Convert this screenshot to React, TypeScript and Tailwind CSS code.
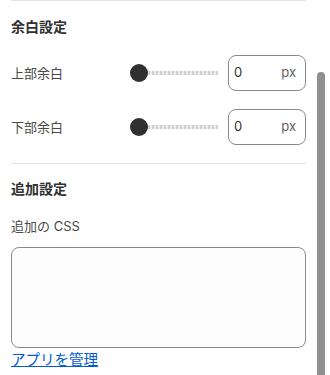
import React from 'react';

const FONT = '"Inter", "Noto Sans CJK JP", sans-serif';

// ─── Slider + number input row ───────────────────────────────────────────────
function SpacingRow({ label, value }: { label: string; value: string }) {
  return (
    <div className="flex items-center h-[36px]">
      <div className="w-[119px] text-[13px] leading-5 text-[#4a4a4a]">{label}</div>
      <div className="flex-1 flex items-center">
        <div className="w-[18px] h-[18px] rounded-full bg-[#303030] shrink-0" />
        <div className="flex-1 h-[4px] bg-[repeating-linear-gradient(90deg,#cfcfcf_0px,#cfcfcf_2px,#ececec_2px,#ececec_4px)]" />
      </div>
      <div className="ml-[10px] w-[78px] h-[36px] rounded-[8px] border border-[#8a8a8a] flex items-center justify-between pl-[5px] pr-[9px]">
        <span className="text-[13px] text-[#303030]">{value}</span>
        <span className="text-[13px] text-[#616161]">px</span>
      </div>
    </div>
  );
}

// ─── Page ────────────────────────────────────────────────────────────────────
export default function App() {
  return (
    <div className="relative h-[375px] w-[330px] overflow-hidden bg-white" style={{ fontFamily: FONT }}>
      <div className="w-[306px] pl-[11px]">
        <div className="border-t border-[#e3e3e3]" />

        <h2 className="mt-[16px] text-[14px] leading-5 font-bold text-[#303030]">余白設定</h2>

        <div className="mt-[18px]">
          <SpacingRow label="上部余白" value="0" />
        </div>
        <div className="mt-[18px]">
          <SpacingRow label="下部余白" value="0" />
        </div>

        <div className="mt-[18px] border-t border-[#e3e3e3]" />

        <h2 className="mt-[15px] text-[14px] leading-5 font-bold text-[#303030]">追加設定</h2>

        <div className="mt-[17px] text-[13px] leading-5 text-[#4a4a4a]">追加の CSS</div>

        <textarea className="mt-[11px] block w-full h-[101px] rounded-[8px] border border-[#8a8a8a] bg-[#fdfdfd] resize-none outline-none" />

        <a href="#" className="mt-[2px] block w-fit text-[14.5px] leading-5 text-[#005bd3] underline">
          アプリを管理
        </a>
      </div>

      {/* scrollbar thumb */}
      <div className="absolute right-[5px] top-[72px] w-[8px] h-[320px] rounded-t-full bg-[#8f8f8f]" />
    </div>
  );
}
